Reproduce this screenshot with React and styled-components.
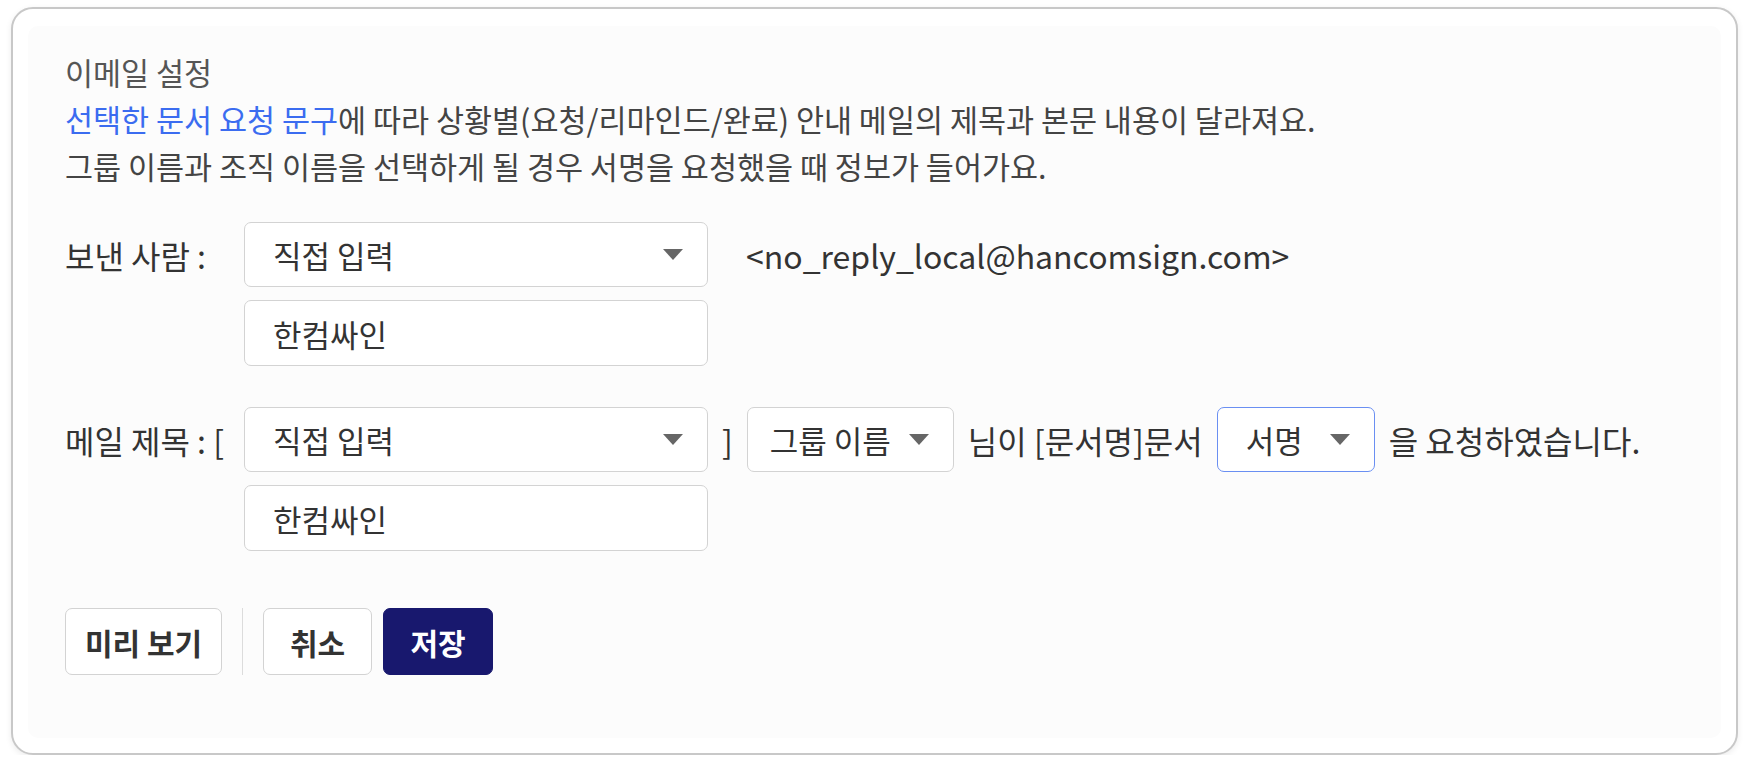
import styled, { createGlobalStyle } from "styled-components";

const GlobalStyle = createGlobalStyle`
  body {
    margin: 0;
    background: #ffffff;
    font-family: "Noto Sans CJK KR", "Noto Sans", sans-serif;
    color: #333;
  }
`;

const FONT = `"Noto Sans CJK KR", "Noto Sans", sans-serif`;

function Caret() {
  return (
    <svg width="20" height="11" viewBox="0 0 20 11">
      <path d="M0 0 L20 0 L10 11 Z" fill="#666" />
    </svg>
  );
}

function Select({ label, width, pad = 28, active }) {
  return (
    <SelectBox $width={width} $pad={pad} $active={active}>
      <span>{label}</span>
      <Caret />
    </SelectBox>
  );
}

function App() {
  return (
    <>
      <GlobalStyle />
      <Card>
        <Panel>
          <Intro>
            <Title>이메일 설정</Title>
            <Desc>
              <Link>선택한 문서 요청 문구</Link>에 따라 상황별(요청/리마인드/완료) 안내 메일의 제목과 본문 내용이 달라져요.
            </Desc>
            <Desc>그룹 이름과 조직 이름을 선택하게 될 경우 서명을 요청했을 때 정보가 들어가요.</Desc>
          </Intro>

          <Row>
            <Label>보낸 사람 :</Label>
            <Stack>
              <Line>
                <Select label="직접 입력" width={464} />
                <Email>&lt;no_reply_local@hancomsign.com&gt;</Email>
              </Line>
              <TextInput defaultValue="한컴싸인" />
            </Stack>
          </Row>

          <Row>
            <Label>메일 제목 : [</Label>
            <Stack>
              <Line>
                <Select label="직접 입력" width={464} />
                <Plain>]</Plain>
                <Select label="그룹 이름" width={207} pad={22} />
                <Plain>님이 [문서명]문서</Plain>
                <Select label="서명" width={158} active />
                <Plain>을 요청하였습니다.</Plain>
              </Line>
              <TextInput defaultValue="한컴싸인" />
            </Stack>
          </Row>

          <Actions>
            <Button $width={157}>미리 보기</Button>
            <Divider />
            <Button $width={109}>취소</Button>
            <Button $width={110} $primary>
              저장
            </Button>
          </Actions>
        </Panel>
      </Card>
    </>
  );
}

export default App;

const Card = styled.div`
  margin: 7px 11px 0 11px;
  height: 748px;
  box-sizing: border-box;
  border: 2px solid #c8c8c8;
  border-radius: 22px;
  background: #fff;
  box-shadow: 0 2px 6px rgba(0, 0, 0, 0.08);
  padding: 17px 15px 15px 15px;
`;

const Panel = styled.div`
  height: 100%;
  box-sizing: border-box;
  background: #fcfcfc;
  border-radius: 10px;
  padding: 23px 37px;
  display: flex;
  flex-direction: column;
`;

const Intro = styled.div`
  display: flex;
  flex-direction: column;
  font-size: 30.5px;
  line-height: 47px;
`;

const Title = styled.div`
  color: #555;
`;

const Desc = styled.div`
  color: #444;
`;

const Link = styled.span`
  color: #3b6cf0;
`;

const Row = styled.div`
  display: flex;
  align-items: flex-start;
  margin-top: 32px;
  & + & {
    margin-top: 41px;
  }
`;

const Label = styled.div`
  width: 179px;
  flex-shrink: 0;
  height: 65px;
  display: flex;
  align-items: center;
  font-size: 32px;
  color: #333;
  white-space: nowrap;
`;

const Stack = styled.div`
  display: flex;
  flex-direction: column;
  gap: 13px;
`;

const Line = styled.div`
  display: flex;
  align-items: center;
  gap: 14px;
`;

const SelectBox = styled.div`
  width: ${(p) => p.$width}px;
  height: 65px;
  box-sizing: border-box;
  border: 1px solid ${(p) => (p.$active ? "#6a8ff2" : "#d3d3d3")};
  border-radius: 7px;
  background: #fff;
  display: flex;
  align-items: center;
  justify-content: space-between;
  padding: 0 24px 0 ${(p) => p.$pad}px;
  font-size: 31px;
  color: #333;
  white-space: nowrap;
`;

const Email = styled.span`
  margin-left: 24px;
  font-size: 32px;
  color: #333;
`;

const Plain = styled.span`
  font-size: 32px;
  color: #333;
  white-space: nowrap;
`;

const TextInput = styled.input`
  width: 464px;
  height: 66px;
  box-sizing: border-box;
  border: 1px solid #d3d3d3;
  border-radius: 7px;
  background: #fff;
  padding: 0 28px;
  font-family: ${FONT};
  font-size: 31px;
  color: #333;
  outline: none;
`;

const Actions = styled.div`
  display: flex;
  align-items: center;
  gap: 11px;
  margin-top: 57px;
`;

const Button = styled.button`
  width: ${(p) => p.$width}px;
  height: 67px;
  padding: 0;
  box-sizing: border-box;
  border-radius: 7px;
  border: 1px solid ${(p) => (p.$primary ? "#18186e" : "#d3d3d3")};
  background: ${(p) => (p.$primary ? "#18186e" : "#fff")};
  color: ${(p) => (p.$primary ? "#fff" : "#333")};
  font-family: ${FONT};
  font-size: 30px;
  font-weight: 700;
  cursor: pointer;
`;

const Divider = styled.div`
  width: 1px;
  height: 67px;
  background: #dcdcdc;
  margin: 0 9px;
`;
